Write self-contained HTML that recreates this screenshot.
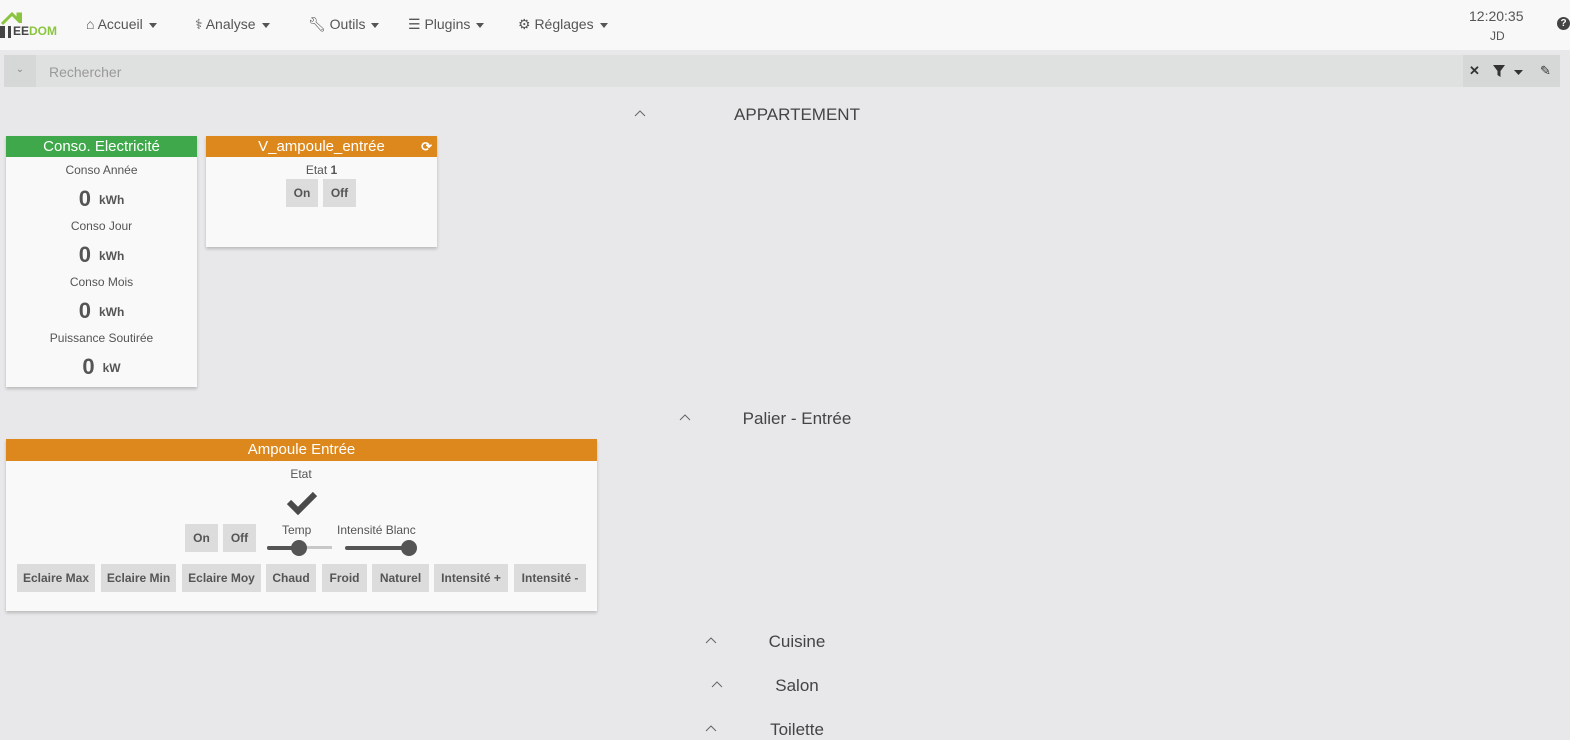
<!DOCTYPE html>
<html><head><meta charset="utf-8"><style>
*{box-sizing:border-box;margin:0;padding:0}
body{width:1570px;height:739px;overflow:hidden;background:#e8e8ea;font-family:"Liberation Sans",sans-serif;color:#555;position:relative}
.a{position:absolute}
.nav{left:0;top:0;width:1570px;height:50px;background:#f8f8f8}
.ni{top:16px;font-size:14px;color:#555;white-space:nowrap}
.car{display:inline-block;width:0;height:0;border-left:4.5px solid transparent;border-right:4.5px solid transparent;border-top:5px solid #555;vertical-align:middle;margin-left:6px}
.search{left:4px;top:55px;width:1556px;height:32px;background:#dfe0e0}
.card{background:#f9f9f9;box-shadow:0 2px 3px rgba(0,0,0,.2)}
.hd{height:21px;color:#fff;font-size:15px;text-align:center;line-height:21px}
.lbl{font-size:12px;text-align:center;color:#555}
.big{font-size:22px;font-weight:bold;color:#555;width:191px;left:6px;text-align:center}
.big span{font-size:12px;margin-left:8px;vertical-align:middle}
.btn{background:#dcdcdc;font-size:12px;font-weight:bold;color:#555;text-align:center;line-height:28px;height:28px}
.sec{font-size:17px;color:#444;text-align:center;width:300px}
</style></head><body>
<div class="a nav"></div>
<div class="a" style="left:0;top:10px;width:22px;height:28px">
<svg width="22" height="28"><path d="M2 14 L12 4 L18 10 L18 4 L21 4 L21 13" fill="none" stroke="#8bc53f" stroke-width="3"/><rect x="0" y="16" width="5" height="12" fill="#444"/><rect x="8" y="16" width="3" height="12" fill="#444"/></svg></div>
<div class="a" style="left:13px;top:24px;font-size:12px;font-weight:bold"><span style="color:#444">EE</span><span style="color:#8bc53f">DOM</span></div>
<div class="a ni" style="left:86px">⌂ Accueil<span class="car"></span></div>
<div class="a ni" style="left:195px">⚕ Analyse<span class="car"></span></div>
<div class="a ni" style="left:308px">🔧︎ Outils<span class="car"></span></div>
<div class="a ni" style="left:408px">☰ Plugins<span class="car"></span></div>
<div class="a ni" style="left:518px">⚙ Réglages<span class="car"></span></div>
<div class="a" style="left:1469px;top:8px;font-size:14px;color:#555">12:20:35</div>
<div class="a" style="left:1490px;top:29px;font-size:12px;color:#555">JD</div>
<div class="a" style="left:1557px;top:17px;width:13px;height:13px;border-radius:50%;background:#444;color:#fff;font-size:10px;font-weight:bold;text-align:center;line-height:13px">?</div>
<div class="a search"></div>
<div class="a" style="left:4px;top:55px;width:32px;height:32px;background:#d6d7d7;color:#888;font-size:10px;text-align:center;line-height:30px">⌄</div>
<div class="a" style="left:49px;top:64px;font-size:14px;color:#999">Rechercher</div>
<div class="a" style="left:1463px;top:55px;width:97px;height:32px;background:#d6d7d7"></div>
<div class="a" style="left:1469px;top:63px;font-size:13px;font-weight:bold;color:#333">✕</div>
<div class="a" style="left:1493px;top:64px"><svg width="32" height="14"><path d="M0 1 H12 L7.5 7 V13 L4.5 11 V7 Z" fill="#333"/><path d="M21 6 H30 L25.5 11 Z" fill="#333"/></svg></div>
<div class="a" style="left:1540px;top:63px;font-size:13px;color:#333">✎</div>

<svg class="a" style="left:634px;top:110px" width="12" height="8"><path d="M1 6 L6 1 L11 6" fill="none" stroke="#666" stroke-width="1"/></svg>
<div class="a sec" style="left:647px;top:105px">APPARTEMENT</div>

<div class="a card" style="left:6px;top:136px;width:191px;height:251px">
<div class="hd" style="background:#3ea84a">Conso. Electricité</div>
</div>
<div class="a lbl" style="left:6px;width:191px;top:163px">Conso Année</div>
<div class="a big" style="top:186px">0<span>kWh</span></div>
<div class="a lbl" style="left:6px;width:191px;top:219px">Conso Jour</div>
<div class="a big" style="top:242px">0<span>kWh</span></div>
<div class="a lbl" style="left:6px;width:191px;top:275px">Conso Mois</div>
<div class="a big" style="top:298px">0<span>kWh</span></div>
<div class="a lbl" style="left:6px;width:191px;top:331px">Puissance Soutirée</div>
<div class="a big" style="top:354px">0<span>kW</span></div>

<div class="a card" style="left:206px;top:136px;width:231px;height:111px">
<div class="hd" style="background:#dd881c">V_ampoule_entrée<span style="position:absolute;right:5px;top:0;font-size:13px;font-weight:bold">⟳</span></div>
<div class="lbl" style="margin-top:6px">Etat <b>1</b></div>
</div>
<div class="a btn" style="left:286px;top:179px;width:32px">On</div>
<div class="a btn" style="left:323px;top:179px;width:33px">Off</div>

<svg class="a" style="left:679px;top:414px" width="12" height="8"><path d="M1 6 L6 1 L11 6" fill="none" stroke="#666" stroke-width="1"/></svg>
<div class="a sec" style="left:647px;top:409px">Palier - Entrée</div>

<div class="a card" style="left:6px;top:439px;width:591px;height:172px">
<div class="hd" style="background:#dd881c;height:22px;line-height:22px">Ampoule Entrée</div>
<div class="lbl" style="margin-top:6px;margin-left:-1px">Etat</div>
</div>
<div class="a" style="left:286px;top:489px"><svg width="32" height="26"><path d="M3 13 L12 22 L29 5" fill="none" stroke="#4a4a4a" stroke-width="6"/></svg></div>
<div class="a btn" style="left:185px;top:524px;width:33px">On</div>
<div class="a btn" style="left:223px;top:524px;width:33px">Off</div>
<div class="a lbl" style="left:282px;top:523px">Temp</div>
<div class="a lbl" style="left:337px;top:523px">Intensité Blanc</div>
<div class="a" style="left:267px;top:546px;width:65px;height:3px;background:#c8c8c8"></div>
<div class="a" style="left:267px;top:546px;width:32px;height:4px;background:#555;border-radius:2px"></div>
<div class="a" style="left:291px;top:540px;width:16px;height:16px;border-radius:50%;background:#555"></div>
<div class="a" style="left:345px;top:546px;width:65px;height:4px;background:#555;border-radius:2px"></div>
<div class="a" style="left:401px;top:540px;width:16px;height:16px;border-radius:50%;background:#555"></div>
<div class="a btn" style="left:17px;top:564px;width:78px">Eclaire Max</div>
<div class="a btn" style="left:101px;top:564px;width:75px">Eclaire Min</div>
<div class="a btn" style="left:182px;top:564px;width:79px">Eclaire Moy</div>
<div class="a btn" style="left:266px;top:564px;width:50px">Chaud</div>
<div class="a btn" style="left:322px;top:564px;width:45px">Froid</div>
<div class="a btn" style="left:372px;top:564px;width:57px">Naturel</div>
<div class="a btn" style="left:434px;top:564px;width:74px">Intensité +</div>
<div class="a btn" style="left:514px;top:564px;width:72px">Intensité -</div>

<svg class="a" style="left:705px;top:637px" width="12" height="8"><path d="M1 6 L6 1 L11 6" fill="none" stroke="#666" stroke-width="1"/></svg>
<div class="a sec" style="left:647px;top:632px">Cuisine</div>
<svg class="a" style="left:711px;top:681px" width="12" height="8"><path d="M1 6 L6 1 L11 6" fill="none" stroke="#666" stroke-width="1"/></svg>
<div class="a sec" style="left:647px;top:676px">Salon</div>
<svg class="a" style="left:705px;top:725px" width="12" height="8"><path d="M1 6 L6 1 L11 6" fill="none" stroke="#666" stroke-width="1"/></svg>
<div class="a sec" style="left:647px;top:720px">Toilette</div>
</body></html>
